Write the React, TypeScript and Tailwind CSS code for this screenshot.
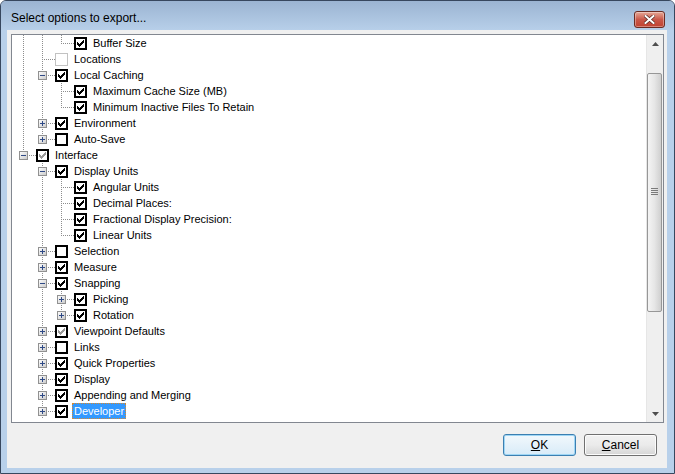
type CheckState = "on" | "off" | "grey" | "disabled";

interface TreeRow {
  label: string;
  guides: string;
  exp?: "+" | "-";
  state: CheckState;
  selected?: boolean;
}

const ROWS: TreeRow[] = [
  { label: "Buffer Size", guides: "11L", state: "on" },
  { label: "Locations", guides: "1T", state: "disabled" },
  { label: "Local Caching", guides: "1T", exp: "-", state: "on" },
  { label: "Maximum Cache Size (MB)", guides: "11T", state: "on" },
  { label: "Minimum Inactive Files To Retain", guides: "11L", state: "on" },
  { label: "Environment", guides: "1T", exp: "+", state: "on" },
  { label: "Auto-Save", guides: "1L", exp: "+", state: "off" },
  { label: "Interface", guides: "L", exp: "-", state: "grey" },
  { label: "Display Units", guides: "0T", exp: "-", state: "on" },
  { label: "Angular Units", guides: "01T", state: "on" },
  { label: "Decimal Places:", guides: "01T", state: "on" },
  { label: "Fractional Display Precision:", guides: "01T", state: "on" },
  { label: "Linear Units", guides: "01L", state: "on" },
  { label: "Selection", guides: "0T", exp: "+", state: "off" },
  { label: "Measure", guides: "0T", exp: "+", state: "on" },
  { label: "Snapping", guides: "0T", exp: "-", state: "on" },
  { label: "Picking", guides: "01T", exp: "+", state: "on" },
  { label: "Rotation", guides: "01L", exp: "+", state: "on" },
  { label: "Viewpoint Defaults", guides: "0T", exp: "+", state: "grey" },
  { label: "Links", guides: "0T", exp: "+", state: "off" },
  { label: "Quick Properties", guides: "0T", exp: "+", state: "on" },
  { label: "Display", guides: "0T", exp: "+", state: "on" },
  { label: "Appending and Merging", guides: "0T", exp: "+", state: "on" },
  { label: "Developer", guides: "0T", exp: "+", state: "on", selected: true },
];

// classic 7x7 check glyph
const CHECK_PIXELS: [number, number][] = [
  [6, 0],
  [5, 1], [6, 1],
  [0, 2], [4, 2], [5, 2], [6, 2],
  [0, 3], [1, 3], [3, 3], [4, 3], [5, 3],
  [0, 4], [1, 4], [2, 4], [3, 4], [4, 4],
  [1, 5], [2, 5], [3, 5],
  [2, 6],
];

const LINE = "#8d8d8d";

function GuideCell({ kind, exp, last }: { kind: string; exp?: "+" | "-"; last: boolean }) {
  const w = last ? 22 : 19;
  return (
    <svg width={w} height={16} className="shrink-0" shapeRendering="crispEdges">
      {kind === "1" && <line x1={9.5} y1={0} x2={9.5} y2={16} stroke={LINE} strokeDasharray="1 1" />}
      {kind === "T" && <line x1={9.5} y1={0} x2={9.5} y2={16} stroke={LINE} strokeDasharray="1 1" />}
      {kind === "L" && <line x1={9.5} y1={0} x2={9.5} y2={9} stroke={LINE} strokeDasharray="1 1" />}
      {last && <line x1={11} y1={8.5} x2={22} y2={8.5} stroke={LINE} strokeDasharray="1 1" />}
      {last && exp && (
        <g>
          <defs>
            <linearGradient id="expg" x1="0" y1="0" x2="1" y2="1">
              <stop offset="0" stopColor="#ffffff" />
              <stop offset="1" stopColor="#c9c9c9" />
            </linearGradient>
          </defs>
          <rect x={5.5} y={4.5} width={8} height={8} fill="url(#expg)" stroke="#919191" />
          <line x1={7} y1={8.5} x2={12} y2={8.5} stroke="#2f4a86" />
          {exp === "+" && <line x1={9.5} y1={6} x2={9.5} y2={11} stroke="#2f4a86" />}
        </g>
      )}
    </svg>
  );
}

function CheckBox({ state }: { state: CheckState }) {
  const border = state === "disabled" ? "#c2c2c2" : "#000000";
  const mark = state === "grey" ? "#9a9a9a" : "#000000";
  return (
    <svg width={13} height={13} className="shrink-0" shapeRendering="crispEdges">
      {state === "disabled" ? (
        <rect x={0.5} y={0.5} width={12} height={12} fill="#ffffff" stroke={border} />
      ) : (
        <rect x={1} y={1} width={11} height={11} fill="#ffffff" stroke={border} strokeWidth={2} />
      )}
      {(state === "on" || state === "grey") &&
        CHECK_PIXELS.map(([x, y]) => <rect key={`${x}-${y}`} x={3 + x} y={3 + y} width={1} height={1} fill={mark} />)}
    </svg>
  );
}

function Row({ row }: { row: TreeRow }) {
  const cols = row.guides.split("");
  return (
    <div className="flex items-center h-[16px]">
      {cols.map((c, i) => (
        <GuideCell key={i} kind={c} exp={row.exp} last={i === cols.length - 1} />
      ))}
      <CheckBox state={row.state} />
      <span
        className={
          row.selected
            ? "ml-[4px] px-[1px] h-[16px] leading-[14px] bg-[#3399ff] text-white border border-dotted border-[#d9892c]"
            : "ml-[4px] px-[2px] leading-[16px] text-black"
        }
      >
        {row.label}
      </span>
    </div>
  );
}

function ScrollBar() {
  return (
    <div className="w-[17px] flex flex-col bg-[#efefef] border-l border-[#e6e6e6]">
      <div className="h-[17px] flex items-center justify-center">
        <svg width={7} height={4}>
          <path d="M3.5 0 L7 4 L0 4 Z" fill="#4d4d4d" />
        </svg>
      </div>
      <div className="h-[21px]" />
      <div className="h-[239px] mr-[1px] rounded-[2px] border border-[#979797] bg-gradient-to-r from-[#f4f4f4] via-[#e6e6e6] to-[#cfcfcf] flex items-center justify-center">
        <div className="flex flex-col gap-[1px] mb-[2px]">
          <div className="w-[7px] h-[1px] bg-[#7a7a7a]" />
          <div className="w-[7px] h-[1px] bg-[#7a7a7a]" />
          <div className="w-[7px] h-[1px] bg-[#7a7a7a]" />
          <div className="w-[7px] h-[1px] bg-[#7a7a7a]" />
        </div>
      </div>
      <div className="flex-1" />
      <div className="h-[17px] flex items-center justify-center">
        <svg width={7} height={4}>
          <path d="M0 0 L7 0 L3.5 4 Z" fill="#4d4d4d" />
        </svg>
      </div>
    </div>
  );
}

export default function App() {
  return (
    <div className="w-[675px] h-[474px] flex flex-col bg-[#b8d0ea] border border-[#37475e] rounded-t-[6px] overflow-hidden font-['Liberation_Sans',Arial,sans-serif]">
      {/* Title bar */}
      <div className="h-[29px] shrink-0 flex items-end pl-[10px] pr-[9px] pb-[2px] bg-gradient-to-b from-[#9bb4d2] to-[#b7cfe9]">
        <span className="text-[12px] leading-[16px] text-black mb-[2px]">Select options to export...</span>
        <button
          type="button"
          className="ml-auto w-[31px] h-[17px] rounded-[3px] border border-[#6b2b22] bg-gradient-to-b from-[#e5a898] via-[#c9584a] to-[#c0412f] flex items-center justify-center shadow-[inset_0_0_0_1px_rgba(255,255,255,0.35)]"
        >
          <svg width={11} height={9} viewBox="0 0 11 9">
            <path d="M1.5 1 L9.5 8 M9.5 1 L1.5 8" stroke="#5a2a24" strokeWidth={3.4} strokeLinecap="square" />
            <path d="M1.5 1 L9.5 8 M9.5 1 L1.5 8" stroke="#ffffff" strokeWidth={2} strokeLinecap="square" />
          </svg>
        </button>
      </div>

      {/* Client area */}
      <div className="flex-1 flex pl-[6px] pr-[7px] pb-[5px]">
        <div className="flex-1 flex flex-col bg-[#f0f0f0] pt-[4px] pl-[4px] pr-[3px]">
          <div className="h-[389px] flex border border-[#828790] bg-white">
            <div className="flex-1 flex flex-col pl-[2px] overflow-hidden text-[11px]">
              {ROWS.map((r) => (
                <Row key={r.label} row={r} />
              ))}
            </div>
            <ScrollBar />
          </div>

          <div className="flex justify-end gap-[8px] pt-[11px] pr-[7px]">
            <button
              type="button"
              className="w-[73px] h-[22px] rounded-[3px] border border-[#3c7fb1] bg-gradient-to-b from-[#f2f8fc] to-[#d8ebf8] shadow-[inset_0_0_0_1px_#9fd6f5] text-[12px] text-black"
            >
              <span className="underline">O</span>K
            </button>
            <button
              type="button"
              className="w-[73px] h-[22px] rounded-[3px] border border-[#707070] bg-gradient-to-b from-[#f2f2f2] via-[#ebebeb] to-[#d6d6d6] shadow-[inset_0_0_0_1px_#fcfcfc] text-[12px] text-black"
            >
              <span className="underline">C</span>ancel
            </button>
          </div>
        </div>
      </div>
    </div>
  );
}
